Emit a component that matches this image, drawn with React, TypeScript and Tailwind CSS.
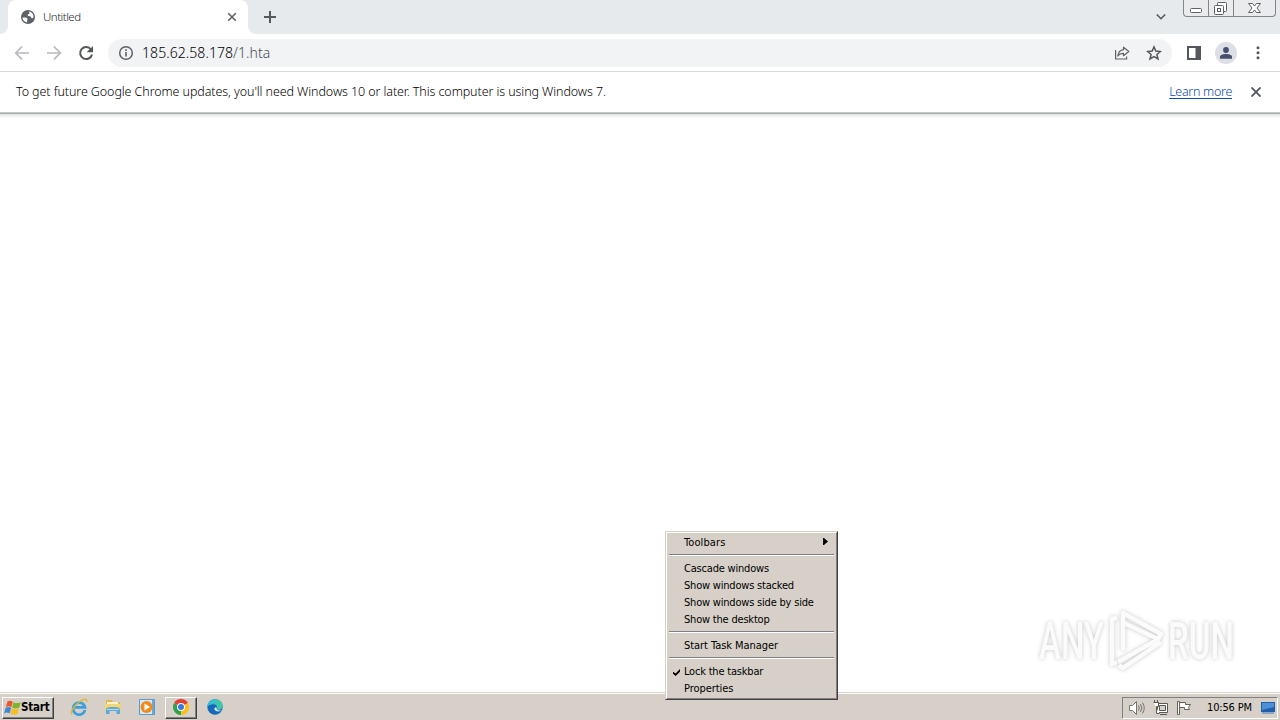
import type { ReactNode } from "react";

const tahoma = "font-['DejaVu_Sans_Condensed','DejaVu_Sans',sans-serif] [font-stretch:condensed]";
const light = "font-['Noto_Sans',sans-serif]";

function WindowButtons() {
  return (
    <div className="mr-[4px] flex h-[17px] w-[93px] overflow-hidden rounded-b-[4px] border border-t-0 border-[#81868c] bg-[#e9ebed]">
      <div className="w-[25px] border-r border-[#81868c]">
        <svg width="24" height="16" viewBox="0 0 24 16" fill="#fff" stroke="#5b6067">
          <rect x="6.5" y="8.5" width="11" height="4" rx="1" />
        </svg>
      </div>
      <div className="w-[25px] border-r border-[#81868c]">
        <svg width="24" height="16" viewBox="0 0 24 16" fill="#fff" stroke="#5b6067">
          <rect x="8.5" y="2.5" width="9" height="9" rx="1" />
          <rect x="5.5" y="5.5" width="9" height="9" rx="1" />
          <rect x="8.5" y="8.5" width="3" height="3" />
        </svg>
      </div>
      <svg width="41" height="16" viewBox="0 0 41 16" fill="#fff" stroke="#5b6067">
        <path d="M14.5 3.5h4l2 2.5 2-2.5h4l-3.5 4.5 3.5 4.5h-4l-2-2.5-2 2.5h-4l3.5-4.5z" />
      </svg>
    </div>
  );
}

function TabStrip() {
  return (
    <div className="flex h-[34px] bg-[#e7eaed]">
      <div className="w-2 bg-white">
        <div className="h-full rounded-br-[8px] bg-[#e7eaed]" />
      </div>
      <div className="flex w-60 items-center rounded-t-[8px] bg-white pl-3">
        <svg width="16" height="16" viewBox="0 0 16 16">
          <circle cx="8" cy="8" r="7" fill="#5f6368" />
          <path d="M2.5 8.6c2.4-.3 4.6-.1 5 1.2.2.9-.6 1.2-.4 3.6C4.3 13.2 2.5 11 2.5 8.6z" fill="#fff" />
          <path d="M8.8 2.6c3 .3 4.8 2.8 4.7 5.6-1 1.6-2.2 1-2.5.1-.4-1.3-1.6-.6-2.700-1.200-1.100-.7-.7-2 .5-2.100 1-.1.6-1.200 0-2.400z" fill="#fff" />
        </svg>
        <span className={`ml-[7px] text-[11.5px] font-light leading-4 tracking-[-0.5px] text-[#25282c] ${light}`}>Untitled</span>
        <svg className="ml-auto mr-[11px]" width="10" height="10" viewBox="0 0 10 10" stroke="#5f6368" strokeWidth="1.6">
          <path d="M1.200 1.200l7.600 7.600M8.800 1.200L1.200 8.800" />
        </svg>
      </div>
      <div className="w-2 bg-white">
        <div className="h-full rounded-bl-[8px] bg-[#e7eaed]" />
      </div>
      <svg className="ml-[8px] mt-[11px]" width="12" height="12" viewBox="0 0 12 12" stroke="#54585d" strokeWidth="2">
        <path d="M6 0v12M0 6h12" />
      </svg>
      <svg className="ml-auto mr-[17px] mt-[13px]" width="10" height="8" viewBox="0 0 10 8" fill="none" stroke="#54585d" strokeWidth="1.6">
        <path d="M.8 1.500L5 5.700l4.200-4.200" />
      </svg>
      <WindowButtons />
    </div>
  );
}

function Toolbar() {
  return (
    <div className="flex h-[37px] items-center bg-white">
      <svg className="ml-[14px]" width="16" height="16" viewBox="0 0 16 16" fill="none" stroke="#b9bbbe" strokeWidth="1.7">
        <path d="M15 8H2.500M8 1.700L1.700 8 8 14.300" />
      </svg>
      <svg className="ml-[16px]" width="16" height="16" viewBox="0 0 16 16" fill="none" stroke="#b9bbbe" strokeWidth="1.7">
        <path d="M1 8h12.500M8 1.700L14.300 8 8 14.300" />
      </svg>
      <svg className="ml-[16px]" width="16" height="16" viewBox="0 0 16 16">
        <path d="M13 4.500A6 6 0 1 0 14 9.500" fill="none" stroke="#54585d" strokeWidth="2" />
        <path d="M15 1v6.300H8.700z" fill="#54585d" />
      </svg>
      <div className="ml-[14px] flex h-7 w-[1064px] items-center rounded-full bg-[#f1f3f4] pl-[10px]">
        <svg width="16" height="16" viewBox="0 0 16 16" fill="none" stroke="#5f6368">
          <circle cx="8" cy="8" r="6.3" strokeWidth="1.5" />
          <path d="M8 7v4.500M8 4.300v1.700" strokeWidth="1.6" />
        </svg>
        <span className={`ml-2 text-[14px] font-light leading-5 tracking-[0.07px] text-black ${light}`}>
          185.62.58.178<span className="text-[#4a4e53]">/1.hta</span>
        </span>
        <svg className="ml-auto" width="16" height="16" viewBox="0 0 16 16" fill="none" stroke="#5f6368" strokeWidth="1.2">
          <path d="M1.600 5v9h11v-2.500" />
          <path d="M9.500 2.200L14.800 6.500 9.500 10.700V8.300C6.500 8.300 5 9.300 3.800 11c.4-3.200 2.200-5.800 5.700-6.300z" strokeLinejoin="round" />
        </svg>
        <svg className="ml-4 mr-[10px]" width="16" height="16" viewBox="0 0 16 16" fill="none" stroke="#54585d" strokeWidth="1.5">
          <path d="M8 1.900l1.800 4.200 4.600.4-3.500 3 1.100 4.500L8 11.600 4 14l1.100-4.500-3.500-3 4.600-.4z" />
        </svg>
      </div>
      <svg className="ml-[15px]" width="14" height="14" viewBox="0 0 14 14">
        <path d="M0 0h14v14H0z" fill="#54585d" />
        <path d="M2 2h6.500v10H2z" fill="#fff" />
      </svg>
      <div className="ml-[14px] flex size-[22px] items-center justify-center rounded-full bg-[#dcdfe5]">
        <svg width="12" height="12" viewBox="0 0 12 12" fill="#47506b">
          <circle cx="6" cy="3" r="2.9" />
          <path d="M0 11.700V9.800C0 7.800 3.500 7 6 7s6 .8 6 2.800v1.900z" />
        </svg>
      </div>
      <svg className="ml-[19px]" width="4" height="16" viewBox="0 0 4 16" fill="#54585d">
        <circle cx="2" cy="2.8" r="1.5" />
        <circle cx="2" cy="7.8" r="1.5" />
        <circle cx="2" cy="12.8" r="1.5" />
      </svg>
    </div>
  );
}

function InfoBar() {
  return (
    <div className={`flex h-[42px] items-center border-b border-t border-b-[#c4c7c7] border-t-[#d6d8da] bg-white pl-4 text-[12.5px] font-light ${light}`}>
      <span className="tracking-[-0.09px] text-black">
        To get future Google Chrome updates, you'll need Windows 10 or later. This computer is using Windows 7.
      </span>
      <span className="ml-auto tracking-[-0.3px] text-[#0b49ad] underline underline-offset-2">Learn more</span>
      <svg className="ml-[19px] mr-[19px]" width="10" height="10" viewBox="0 0 10 10" stroke="#54585d" strokeWidth="1.9">
        <path d="M.5.500l9 9M9.500.500l-9 9" />
      </svg>
    </div>
  );
}

function Watermark() {
  return (
    <svg
      className="absolute left-[1030px] top-[600px] overflow-visible drop-shadow-[0_0_2px_rgba(0,0,0,0.22)]"
      width="230"
      height="80"
      viewBox="0 0 230 80"
      fill="#fbfbfb"
      fontFamily="Roboto, sans-serif"
      fontSize="51"
      fontWeight="500"
    >
      <text x="9" y="59" textLength="65" lengthAdjust="spacingAndGlyphs">ANY</text>
      <text x="138" y="59" textLength="66" lengthAdjust="spacingAndGlyphs">RUN</text>
      <g fill="none" stroke="#fbfbfb" strokeWidth="4.5" strokeLinejoin="round">
        <path d="M87 18l-5 1v45l5-2" />
        <path d="M93 50V13l38 21-3 5-34-16" />
        <path d="M127 40L88 62M131 42L93 68l-4-3" />
      </g>
    </svg>
  );
}

function MenuItem({ children, mark, arrow }: { children: ReactNode; mark?: boolean; arrow?: boolean }) {
  return (
    <div className="flex h-[17px] items-center">
      <div className="flex w-4 justify-center">
        {mark && (
          <svg className="mt-px" width="7" height="7" viewBox="0 0 8 8">
            <path d="M0 3l3 2 5-5v3L3 8 0 5.500z" />
          </svg>
        )}
      </div>
      <span className="whitespace-nowrap">{children}</span>
      {arrow && (
        <svg className="mb-[2px] ml-auto mr-[7px]" width="5" height="7" viewBox="0 0 5 7">
          <path d="M0 0h1l4 3.500L1 7H0z" />
        </svg>
      )}
    </div>
  );
}

function Separator() {
  return (
    <div className="h-[9px] px-px pt-[3px]">
      <div className="h-[2px] w-full border-t border-[#808080] bg-white" />
    </div>
  );
}

function TaskbarMenu() {
  return (
    <div className="absolute left-[665px] top-[531px] border border-b-[#404040] border-l-[#d6d0c8] border-r-[#404040] border-t-[#d6d0c8]">
      <div className={`h-[167px] w-[171px] border border-b-[#808080] border-l-white border-r-[#808080] border-t-white bg-[#d6d0c8] p-px text-[11px] leading-[17px] tracking-[-0.2px] text-black ${tahoma}`}>
        <MenuItem arrow><span className="tracking-[0.1px]">Toolbars</span></MenuItem>
        <Separator />
        <MenuItem>Cascade windows</MenuItem>
        <MenuItem>Show windows stacked</MenuItem>
        <MenuItem>Show windows side by side</MenuItem>
        <MenuItem>Show the desktop</MenuItem>
        <Separator />
        <MenuItem><span className="tracking-[-0.05px]">Start Task Manager</span></MenuItem>
        <Separator />
        <MenuItem mark>Lock the taskbar</MenuItem>
        <MenuItem><span className="tracking-[-0.05px]">Properties</span></MenuItem>
      </div>
    </div>
  );
}

function WindowsFlag() {
  return (
    <svg width="17" height="16" viewBox="0 0 16 15">
      <path d="M3.200 1.500C5 .3 6.500.5 8.200 1.500L6.900 6.700C5.200 5.700 3.600 5.700 1.700 6.700z" fill="#e8562a" />
      <path d="M8.900 2c2 1.200 4 1.200 6.900 0l-1.500 5.200c-2.300 1.100-4.500 1-6.600-.1z" fill="#7fb52c" />
      <path d="M1.500 7.400c2-1 3.500-1 5.200 0L5.300 12.600C3.700 11.600 2 11.600 0 12.600z" fill="#3f86d8" />
      <path d="M7.500 7.800c2 1.200 4 1.200 6.600.1l-1.400 5.200c-2.300 1.100-4.500 1-6.600-.2z" fill="#f7bd25" />
    </svg>
  );
}

function IeIcon() {
  return (
    <svg width="18" height="18" viewBox="0 0 18 18" fill="none">
      <path d="M15 12A6 6 0 1 1 15 9.300H5" stroke="#3a9fe0" strokeWidth="2.7" />
      <path d="M2 16.500C-.5 14 5 6.500 10.500 3 14.500.5 17.500.5 16.500 4" stroke="#e6b42f" strokeWidth="1.4" />
    </svg>
  );
}

function FolderIcon() {
  return (
    <svg width="18" height="18" viewBox="0 0 18 18">
      <path d="M2 2h6l1 2h7v9H2z" fill="#dfb94f" />
      <path d="M3 4h11v3H3z" fill="#f9f2cf" />
      <path d="M1 6h16v7H1z" fill="#f3d571" />
      <path d="M2 16v-4.500C2 9.500 5 9 9 9s7 .5 7 2.500V16h-3.500v-3h-7v3z" fill="#5fa9da" />
      <path d="M3 11h12v1H3z" fill="#b5daf0" />
    </svg>
  );
}

function MediaIcon() {
  return (
    <svg width="18" height="18" viewBox="0 0 18 18">
      <path d="M1.500 1.500h15v15h-15z" fill="#d7e9f8" stroke="#5b9bd0" />
      <path d="M14 2h2v14h-2z" fill="#6ba8da" />
      <circle cx="8.5" cy="9" r="6" fill="#f08a1d" />
      <path d="M6.500 5.500l5.500 3.500-5.500 3.500z" fill="#fff" />
    </svg>
  );
}

function ChromeIcon() {
  return (
    <svg width="16" height="16" viewBox="0 0 16 16">
      <path d="M8 8L1.070 4A8 8 0 0 1 14.930 4z" fill="#e24033" />
      <path d="M8 8l6.930-4A8 8 0 0 1 8 16z" fill="#fbc116" />
      <path d="M8 8v8A8 8 0 0 1 1.070 4z" fill="#31a350" />
      <circle cx="8" cy="8" r="4" fill="#fff" />
      <circle cx="8" cy="8" r="3" fill="#3979e0" />
    </svg>
  );
}

function EdgeIcon() {
  return (
    <svg width="16" height="16" viewBox="0 0 16 16">
      <circle cx="8" cy="8" r="7.7" fill="#1769b9" />
      <path d="M.3 8C.5 3.500 4 .3 8 .3c4.500 0 7.700 3 7.700 6.500 0 2.500-2 4-4.200 4-1.700 0-2.500-.7-1.800-1.800.8-1.500-.2-3.600-2.700-3.800C4 5 1.500 6 .3 8z" fill="#35bfd0" />
      <path d="M10 .6c3.300.8 5.700 3.300 5.700 6.200 0 2.500-2 4-4.200 4-1.700 0-2.500-.7-1.800-1.800C11 6 10 3 7 2z" fill="#4fcb83" opacity=".6" />
      <path d="M9.700 9c-.8 1.400 1 3 5 2.300-1.500 1.500-6 1.700-7.200-.8C7 9 8 8 9.700 9z" fill="#d6eaf5" />
    </svg>
  );
}

function Taskbar() {
  return (
    <div className="h-7 border-t border-[#d6d0c8]">
      <div className={`flex h-[27px] items-center border-t border-white bg-[#d6d0c8] text-black ${tahoma}`}>
        <div className="ml-[2px] mt-[1px] flex h-[22px] w-[52px] items-center border border-b-[#404040] border-l-white border-r-[#404040] border-t-white pl-px shadow-[inset_-1px_-1px_#808080]">
          <WindowsFlag />
          <span className="text-[11.5px] font-bold tracking-[-0.2px]">Start</span>
        </div>
        <div className="ml-[16px] flex items-center">
          <IeIcon />
          <div className="ml-4"><FolderIcon /></div>
          <div className="ml-4"><MediaIcon /></div>
        </div>
        <div className="ml-[9px] mt-[1px] flex h-[22px] w-8 items-center justify-center border border-b-[#404040] border-l-white border-r-[#404040] border-t-white pb-[2px] shadow-[inset_-1px_-1px_#808080]">
          <ChromeIcon />
        </div>
        <div className="ml-[10px]"><EdgeIcon /></div>
        <div className="ml-auto mr-[2px] mt-[1px] flex h-[22px] w-[156px] items-center border border-b-white border-l-[#808080] border-r-white border-t-[#808080] pl-[5px]">
          <svg width="18" height="16" viewBox="0 0 18 16" fill="none" stroke="#77736d">
            <path d="M1.500 5.500h3l4-4v13l-4-4h-3z" fill="#fff" />
            <path d="M10.500 5.500q1.500 2.500 0 5M12.500 4q2.500 4 0 8M14.500 2.500q3.500 5.500 0 11" />
          </svg>
          <svg className="ml-[6px]" width="17" height="16" viewBox="0 0 17 16" fill="#fff" stroke="#5b5752">
            <path d="M5.500 3.500h10v9h-10zM8 14.500h7" />
            <path d="M7.500 5.500h6v5h-6z" fill="#d6d0c8" />
            <path d="M1.500 2.500h5v4h-2v7h3M2.500 0v2M5.500 0v2" />
          </svg>
          <svg className="ml-[7px]" width="17" height="16" viewBox="0 0 17 16" fill="#fff" stroke="#66625d">
            <path d="M1.500 1.500h2v13h-2z" />
            <path d="M3.500 2.500h6v2h5l-2 3 1 2h-5v-2h-5z" />
          </svg>
          <span className="ml-[14px] mt-px whitespace-nowrap text-[11px] tracking-[-0.15px]">10:56 PM</span>
          <svg className="ml-auto mr-px" width="16" height="16" viewBox="0 0 16 16">
            <path d="M1 2h14v10H1z" fill="#245da8" />
            <path d="M2 3h12v4L2 10z" fill="#4a91d6" />
            <path d="M2 12h12v2H2z" fill="#8ba6c3" />
          </svg>
        </div>
      </div>
    </div>
  );
}

export default function App() {
  return (
    <div className="relative flex h-[720px] w-[1280px] flex-col overflow-hidden bg-white">
      <TabStrip />
      <Toolbar />
      <InfoBar />
      <main className="flex-1 bg-white">
        <div className="h-[5px] border-t border-[#a9acac] bg-linear-to-b from-[#dfe0e0] to-white" />
      </main>
      <Taskbar />
      <Watermark />
      <TaskbarMenu />
    </div>
  );
}
